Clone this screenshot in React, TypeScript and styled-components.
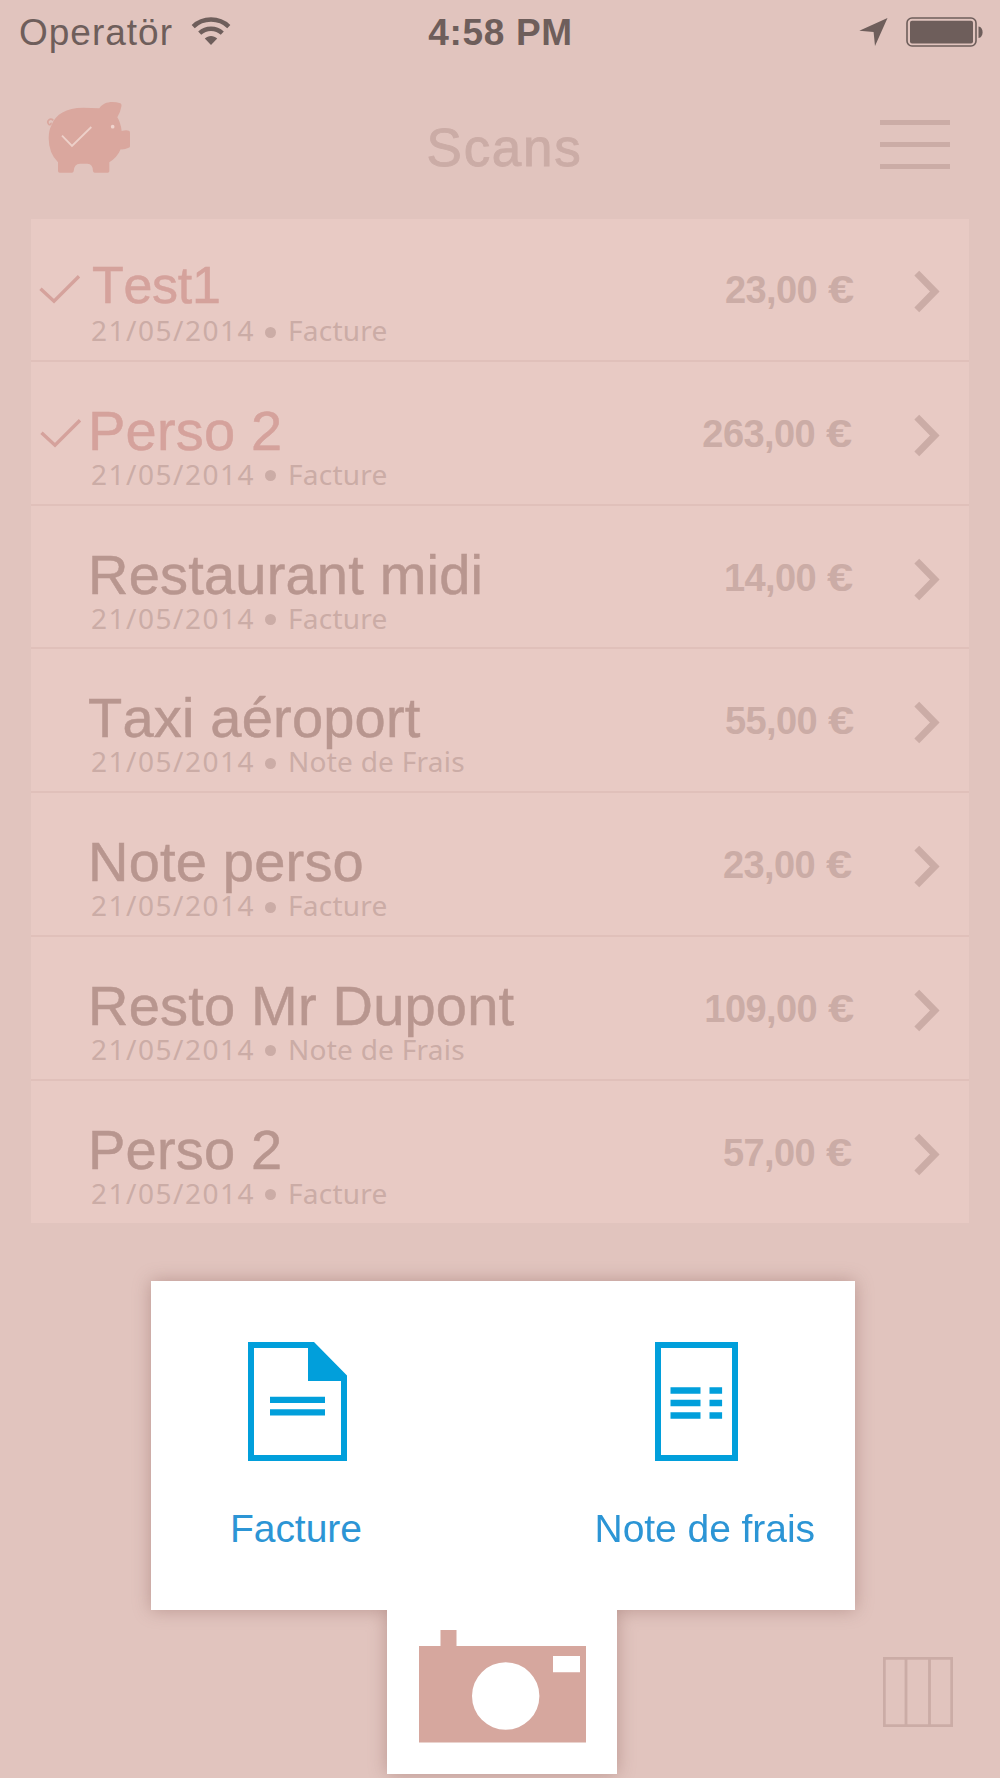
import React from "react";
import styled, { createGlobalStyle } from "styled-components";

const colors = {
  page: "#e1c4be",
  sheet: "#e8cac4",
  divider: "#e0c0ba",
  status: "#6e5e5b",
  muted: "#cbaca6",
  name: "#b8968f",
  accent: "#d5a29c",
  pig: "#daa79e",
  camera: "#d6a79e",
  blue: "#019fdb",
  label: "#2c95d5",
};

const GlobalStyle = createGlobalStyle`
  *, *::before, *::after { box-sizing: border-box; }
  body { margin: 0; background: ${colors.page}; }
  svg { display: block; flex: none; }
`;

const Screen = styled.main`
  position: relative;
  display: flex;
  flex-direction: column;
  width: 1000px;
  height: 1778px;
  overflow: hidden;
  background: ${colors.page};
  font-family: "Liberation Sans", Arial, sans-serif;
`;

const StatusBar = styled.div`
  display: grid;
  grid-template-columns: 1fr auto 1fr;
  align-items: start;
  height: 64px;
  padding: 12px 16px 0 18px;
  color: ${colors.status};
`;

const StatusGroup = styled.div<{ $end?: boolean }>`
  display: flex;
  justify-content: ${(p) => (p.$end ? "flex-end" : "flex-start")};
  padding-top: ${(p) => (p.$end ? "5px" : "0")};
  gap: 18px;
`;

const Carrier = styled.span`
  padding-left: 1px;
  font-size: 37px;
  line-height: 42px;
  letter-spacing: 1px;
`;

const Clock = styled.span`
  padding-right: 1px;
  font-size: 37px;
  font-weight: 700;
  line-height: 42px;
  letter-spacing: 0.7px;
`;

const WifiSlot = styled.div`
  padding-top: 5px;
`;

const Header = styled.header`
  display: grid;
  grid-template-columns: 1fr auto 1fr;
  align-items: start;
  height: 155px;
  padding: 37px 50px 0 46px;
`;

const Title = styled.h1`
  margin: 0;
  padding: 17px 0 0 13px;
  font-size: 53px;
  font-weight: 400;
  line-height: 60px;
  letter-spacing: 1.7px;
  color: ${colors.muted};
  -webkit-text-stroke: 0.9px ${colors.muted};
`;

const MenuButton = styled.button`
  display: flex;
  flex-direction: column;
  justify-self: end;
  gap: 17px;
  width: 70px;
  margin: 19px 0 0;
  padding: 0;
  border: 0;
  background: none;
`;

const MenuLine = styled.span`
  height: 5px;
  background: ${colors.muted};
`;

const List = styled.ul`
  margin: 0 31px;
  padding: 0;
  list-style: none;
  background: ${colors.sheet};
`;

const Row = styled.li`
  display: flex;
  height: 143.8px;
  border-bottom: 2px solid ${colors.divider};

  &:first-child {
    height: 142.8px;
  }

  &:first-child > * {
    margin-top: -1px;
  }

  &:last-child {
    height: 141.8px;
    border-bottom: 0;
  }
`;

const CheckSlot = styled.div<{ $shift: number }>`
  width: 57px;
  padding: 56px 0 0 ${(p) => 8 + p.$shift}px;
`;

const Body = styled.div`
  flex: 1;
`;

const Name = styled.div<{ $checked: boolean; $small: boolean }>`
  height: 96px;
  padding: ${(p) => (p.$small ? "40px 0 0 4px" : "42px 0 0 0")};
  font-size: ${(p) => (p.$small ? 52 : 56)}px;
  line-height: 54px;
  letter-spacing: ${(p) => (p.$small ? -0.3 : 0.2)}px;
  font-kerning: none;
  white-space: nowrap;
  color: ${(p) => (p.$checked ? colors.accent : colors.name)};
  -webkit-text-stroke: 0.5px currentColor;
`;

const Meta = styled.div`
  display: flex;
  align-items: center;
  padding-left: 3px;
  font-family: "Noto Sans", "Open Sans", sans-serif;
  font-size: 28px;
  line-height: 32px;
  color: ${colors.muted};
`;

const DateText = styled.span`
  width: 174px;
  letter-spacing: 1.5px;
`;

const Dot = styled.i`
  width: 11px;
  height: 11px;
  margin: 4px 12px 0 0;
  border-radius: 50%;
  background: ${colors.muted};
`;

const Kind = styled.span`
  letter-spacing: 0.25px;
`;

const Amount = styled.div<{ $inset: number }>`
  display: flex;
  gap: 11px;
  padding: 50px ${(p) => p.$inset}px 0 0;
  font-size: 38px;
  font-weight: 700;
  line-height: 44px;
  letter-spacing: -0.6px;
  color: ${colors.muted};
`;

const Euro = styled.span`
  width: 26px;
  letter-spacing: 0;
  transform: scaleX(1.24);
  transform-origin: 0 50%;
`;

const ChevronSlot = styled.div`
  padding: 52px 29px 0 60px;
`;

const Popover = styled.section`
  position: absolute;
  left: 151px;
  bottom: 4px;
  display: flex;
  flex-direction: column;
  width: 704px;
  filter: drop-shadow(0 0 9px rgba(130, 85, 80, 0.42));
`;

const Choices = styled.div`
  display: flex;
  justify-content: space-between;
  height: 329px;
  padding: 61px 40px 0 79px;
  background: #fff;
`;

const Choice = styled.button<{ $indent: number }>`
  display: flex;
  flex-direction: column;
  gap: 46px;
  margin: 0;
  padding: 0;
  border: 0;
  background: none;
  font: 39px/44px "Liberation Sans", Arial, sans-serif;
  letter-spacing: -0.05px;
  color: ${colors.label};

  svg {
    margin-left: ${(p) => p.$indent}px;
  }
`;

const CameraTab = styled.button`
  display: flex;
  align-items: flex-start;
  width: 230px;
  height: 164px;
  margin: 0 0 0 236px;
  padding: 20px 0 0 32px;
  border: 0;
  background: #fff;
`;

const Footer = styled.footer`
  display: flex;
  justify-content: flex-end;
  margin-top: auto;
  padding: 0 47px 51px 0;
`;

type Scan = {
  name: string;
  kind: string;
  amount: string;
  checked?: boolean;
  small?: boolean;
  inset: number;
};

const scans: Scan[] = [
  { name: "Test1", kind: "Facture", amount: "23,00", checked: true, small: true, inset: 0 },
  { name: "Perso 2", kind: "Facture", amount: "263,00", checked: true, inset: 2 },
  { name: "Restaurant midi", kind: "Facture", amount: "14,00", inset: 1 },
  { name: "Taxi aéroport", kind: "Note de Frais", amount: "55,00", inset: 0 },
  { name: "Note perso", kind: "Facture", amount: "23,00", inset: 2 },
  { name: "Resto Mr Dupont", kind: "Note de Frais", amount: "109,00", inset: 0 },
  { name: "Perso 2", kind: "Facture", amount: "57,00", inset: 2 },
];

const Wifi = () => (
  <svg width="40" height="30" viewBox="0 0 40 30" fill="none" stroke={colors.status} strokeWidth="4.4">
    <path d="M2.2 9.6C12 .2 28 .2 37.8 9.6" />
    <path d="M8.7 16.2C15 10.2 25 10.2 31.3 16.2" />
    <path d="M13.8 21.6C17.3 18.2 22.7 18.2 26.2 21.6L20 28Z" fill={colors.status} stroke="none" />
  </svg>
);

const LocationArrow = () => (
  <svg width="29" height="29" viewBox="0 0 29 29">
    <path d="M28.5 1L16 29L14.6 15L.3 13.8Z" fill={colors.status} />
  </svg>
);

const Battery = () => (
  <svg width="78" height="30" viewBox="0 0 78 30" fill={colors.status}>
    <rect x="1" y="1" width="69" height="28" rx="5" fill="none" stroke={colors.status} strokeWidth="1.6" />
    <rect x="4" y="3.8" width="63" height="22.6" rx="2" />
    <path d="M72.5 9.5C78 10 78 20.5 72.5 21Z" />
  </svg>
);

const Pig = () => (
  <svg width="85" height="73" viewBox="138 301 255 219">
    <path
      fill={colors.pig}
      d="M298 323C310 304 335 300 361 308Q366 310 364 318Q361 335 352 350Q362 366 365 391Q378 387 387 390Q390 391 390 396V437Q390 441 386 441Q374 447 362 446Q352 470 328 485V512Q328 516 323 516H284Q280 516 279 512Q279 489 262 489H240Q222 489 221 512Q220 516 216 516H179Q174 516 174 511V485Q146 457 146 412Q146 389 155 372C168 341 197 321 250 321Z"
    />
    <path d="M160 359C150 350 140 361 145 369C149 376 155 370 152 366" fill="none" stroke={colors.pig} strokeWidth="5" />
    <circle cx="338" cy="378" r="5.5" fill="#f0d4ce" />
    <path d="M186 405L216 436L274 379" fill="none" stroke="#edd0c9" strokeWidth="5.5" />
  </svg>
);

const Check = () => (
  <svg width="42" height="30" viewBox="0 0 42 30" fill="none" stroke={colors.accent} strokeWidth="3.4">
    <path d="M1.5 14.8L15 27.2L40 2.2" />
  </svg>
);

const Chevron = () => (
  <svg width="26" height="43" viewBox="0 0 26 43" fill="none" stroke={colors.muted} strokeWidth="6.8">
    <path d="M2.8 3.2L20.8 21.5L2.8 39.8" />
  </svg>
);

const InvoiceIcon = () => (
  <svg width="99" height="119" viewBox="0 0 99 119" fill={colors.blue}>
    <path fillRule="evenodd" d="M0 0H66L99 33.5V119H0ZM6 6V113H93V39H60V6Z" />
    <path d="M22 54.7H77V61H22ZM22 67.3H77V73.5H22Z" />
  </svg>
);

const ExpenseIcon = () => (
  <svg width="83" height="119" viewBox="0 0 83 119" fill={colors.blue}>
    <path fillRule="evenodd" d="M0 0H83V119H0ZM6 6V113H77V6Z" />
    {[45.3, 57.8, 70.3].map((y) => (
      <path key={y} d={`M15.5 ${y}h30v6.4h-30ZM54.5 ${y}h12.6v6.4h-12.6Z`} />
    ))}
  </svg>
);

const Camera = () => (
  <svg width="168" height="113" viewBox="0 0 168 113">
    <path
      fill={colors.camera}
      fillRule="evenodd"
      d="M0 16H21.5V0H37.5V16H167V112.5H0ZM134 26V42.3H161V26ZM53 66A33.7 33.7 0 1 0 120.4 66A33.7 33.7 0 1 0 53 66Z"
    />
  </svg>
);

const Columns = () => (
  <svg width="70" height="70" viewBox="0 0 70 70" fill="none" stroke={colors.muted} strokeWidth="2.8">
    <path d="M1.3 1.3H68.7V68.7H1.3ZM23 1V69M46.5 1V69" />
  </svg>
);

export default function App() {
  return (
    <>
      <GlobalStyle />
      <Screen>
        <StatusBar>
          <StatusGroup>
            <Carrier>Operatör</Carrier>
            <WifiSlot>
              <Wifi />
            </WifiSlot>
          </StatusGroup>
          <Clock>4:58 PM</Clock>
          <StatusGroup $end>
            <LocationArrow />
            <Battery />
          </StatusGroup>
        </StatusBar>

        <Header>
          <Pig />
          <Title>Scans</Title>
          <MenuButton aria-label="Menu">
            <MenuLine />
            <MenuLine />
            <MenuLine />
          </MenuButton>
        </Header>

        <List>
          {scans.map((scan, i) => (
            <Row key={i}>
              <CheckSlot $shift={i}>{scan.checked && <Check />}</CheckSlot>
              <Body>
                <Name $checked={!!scan.checked} $small={!!scan.small}>
                  {scan.name}
                </Name>
                <Meta>
                  <DateText>21/05/2014</DateText>
                  <Dot />
                  <Kind>{scan.kind}</Kind>
                </Meta>
              </Body>
              <Amount $inset={scan.inset}>
                {scan.amount}
                <Euro>€</Euro>
              </Amount>
              <ChevronSlot>
                <Chevron />
              </ChevronSlot>
            </Row>
          ))}
        </List>

        <Footer>
          <Columns />
        </Footer>

        <Popover>
          <Choices>
            <Choice $indent={18}>
              <InvoiceIcon />
              Facture
            </Choice>
            <Choice $indent={60}>
              <ExpenseIcon />
              Note de frais
            </Choice>
          </Choices>
          <CameraTab aria-label="Scanner">
            <Camera />
          </CameraTab>
        </Popover>
      </Screen>
    </>
  );
}
